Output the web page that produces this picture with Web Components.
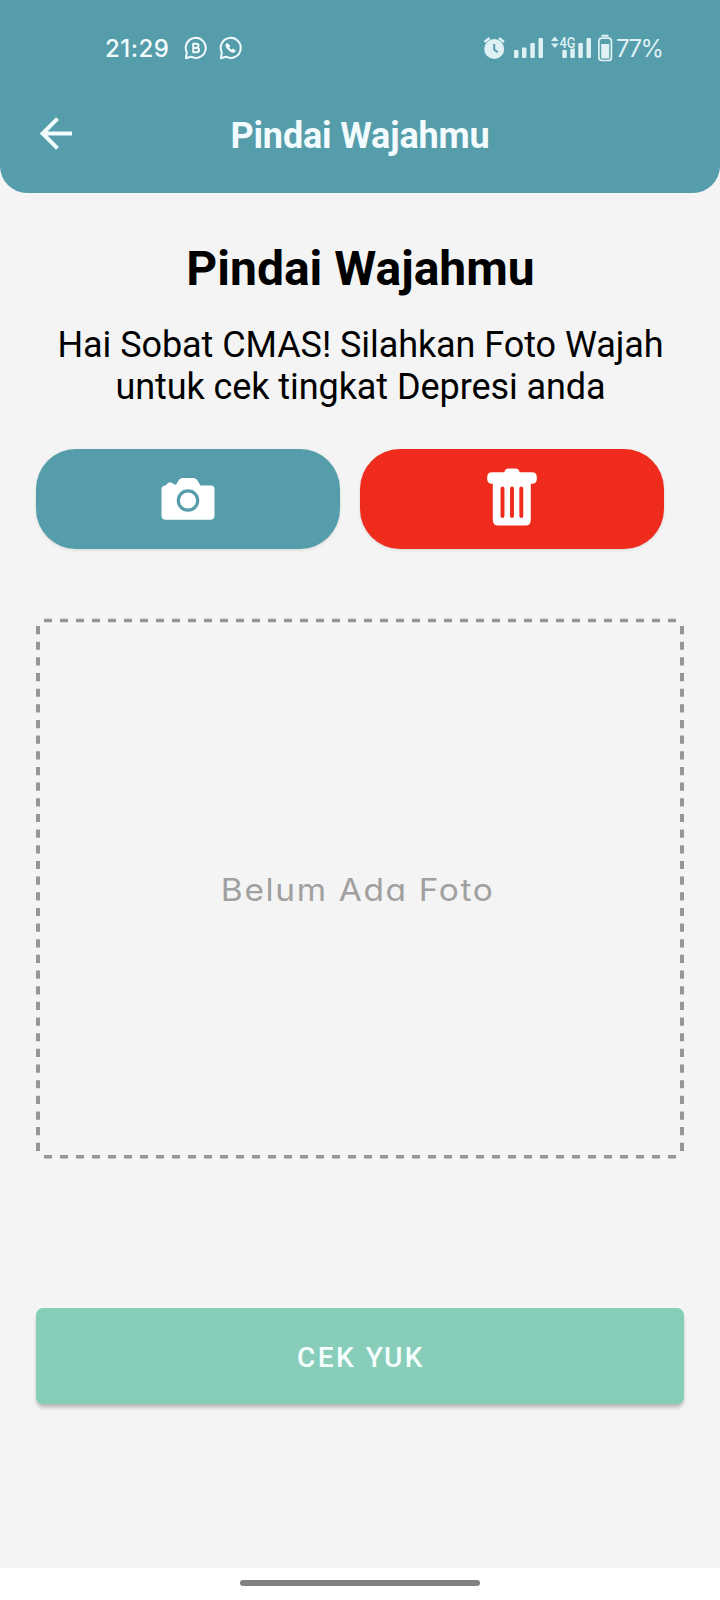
<!DOCTYPE html>
<html lang="id">
<head>
<meta charset="utf-8">
<title>Pindai Wajahmu</title>
<style>
html,body{margin:0;padding:0}
body{background:#f4f4f4;font-family:Roboto,"Liberation Sans",sans-serif;color:#000}
</style>
</head>
<body>
<scan-screen></scan-screen>
<script>
function define(name, html){
  const t=document.createElement('template');
  t.innerHTML=html;
  customElements.define(name,class extends HTMLElement{
    constructor(){super();this.attachShadow({mode:'open'}).appendChild(t.content.cloneNode(true));}
  });
}

define('status-bar',`
<style>
:host{display:flex;align-items:center;height:96px;box-sizing:border-box;padding:0 58px 0 105px;color:#f2fbfd;font:500 24px/28px Inter,Roboto,sans-serif}
svg{display:block;flex:none}
.time{width:79px;letter-spacing:.5px;white-space:nowrap;padding-top:2px}
.sys{margin-left:auto}
.pct{width:46px;margin-left:3px;font-weight:400;white-space:nowrap;letter-spacing:-1.6px;color:#dff1f5;padding-top:2px}
</style>
<span class="time">21:29</span>
<svg width="60" height="26" viewBox="184 35 60 26" fill="none" stroke="#f2fbfd" stroke-width="2" stroke-linejoin="round">
<path d="M186 58.200l.8-5.800A10 10 0 1 1 191 56.700Z"/>
<path d="M193.200 43.700h3.200a2 2 0 0 1 0 4.200h-3.200zM193.200 47.900h3.700a2.150 2.150 0 0 1 0 4.300h-3.700z"/>
<path d="M221 58.200l.8-5.800A10 10 0 1 1 226 56.700Z"/>
<path d="M227.200 43.200l-1.200 1.300c-.4 3.500 4.600 8.200 8 7.800l1.500-1.500-2.600-1.800-1.600 1c-1.100-.5-2-1.400-2.500-2.600l.9-1.500z" fill="#f2fbfd" stroke-width="1"/>
</svg>
<svg class="sys" width="130" height="28" viewBox="483 34 130 28" fill="#dff1f5">
<circle cx="494.200" cy="49" r="10"/><path d="M484.500 42l5-4M499 38l5 4" stroke="#dff1f5" stroke-width="2.300" fill="none"/><path d="M494.200 44v5.500l3.500 2.700" fill="none" stroke="#559daa" stroke-width="2"/>
<rect x="514" y="50" width="4.500" height="8" rx="1"/><rect x="522" y="47.500" width="4.500" height="10.500" rx="1"/><rect x="530.300" y="43" width="4.500" height="15" rx="1"/><rect x="538.500" y="38" width="4.500" height="20" rx="1"/>
<path d="M551 41l3.800-4.500L558.600 41zM551 43.500h7.600L554.800 48z"/>
<rect x="562.300" y="50" width="4.500" height="8" rx="1"/><rect x="570.300" y="47.500" width="4.500" height="10.500" rx="1"/><rect x="578.300" y="43" width="4.500" height="15" rx="1"/><rect x="586.500" y="38" width="4.500" height="20" rx="1"/>
<text x="559.500" y="47.500" font-family="Roboto" font-size="14" font-weight="500" textLength="16" lengthAdjust="spacingAndGlyphs" stroke="#559daa" stroke-width="1.500" paint-order="stroke">4G</text>
<path d="M601.500 34.800h7v2h-7zM601.200 44h8v14.500h-8z"/><rect x="598.900" y="38.200" width="12.500" height="22.300" rx="3" fill="none" stroke="#dff1f5" stroke-width="1.700"/>
</svg>
<span class="pct">77%</span>`);

define('app-header',`
<style>
:host{display:block;height:193px;background:#559daa;border-radius:0 0 27px 27px}
.bar{display:grid;grid-template-columns:80px 1fr 80px;align-items:center;height:77px;color:#f2fbfd}
svg{display:block;margin:0 0 2px 40px}
h2{margin:0;padding-top:2px;font-size:36px;line-height:42px;font-weight:700;letter-spacing:-.15px;text-align:center;white-space:nowrap}
</style>
<status-bar></status-bar>
<div class="bar"><svg width="33" height="34" viewBox="0 0 33 34" fill="none" stroke="#f2fbfd" stroke-width="4"><path d="M32 16.500H3M17.500 1.700L2.700 16.500l14.800 14.800"/></svg><h2><slot></slot></h2></div>`);

define('pill-button',`
<style>
:host{display:flex;align-items:center;justify-content:center;height:100px;border-radius:40px;background:var(--fill);box-shadow:0 1px 3px rgba(0,0,0,.12)}
</style><slot></slot>`);

define('camera-icon',`
<style>:host,svg{display:block}</style>
<svg width="54" height="44" viewBox="161 477 54 44"><path fill="#fff" d="M165.500 485.500l2.500-2.500q3-2 5.500 1l2.500.7 2.500-4.200q1.300-2.500 4-2.500h11q2.600 0 4 2.500l3 5h10.500q3.500 0 3.500 3.500v26.500q0 4.200-4.200 4.200h-44.600q-4.200 0-4.200-4.200v-25.800q0-4.200 4-4.200z"/><circle cx="188" cy="500.500" r="9.700" fill="#fff" stroke="#559daa" stroke-width="3.200"/></svg>`);

define('trash-icon',`
<style>:host,svg{display:block}svg{margin-bottom:5px}</style>
<svg width="50" height="58" viewBox="487 468 50 58"><path fill="#fff" d="M492 472.200h12.500q.5-3.700 4-3.700h7q3.500 0 4 3.700H532q4.800 0 4.800 4.800v2q0 4.800-4.800 4.800h-1.200V520q0 5.500-5.500 5.500h-27q-5.500 0-5.500-5.500v-36.200H492q-4.800 0-4.800-4.800v-2q0-4.800 4.800-4.800z"/><path d="M502.500 488.500v27.500M512 488.500v27.500M521.300 488.500v27.500" stroke="#ef2b1d" stroke-width="3.900" stroke-linecap="round"/></svg>`);

define('photo-frame',`
<style>
:host{display:grid;width:648px;height:541px}
svg,.label{grid-area:1/1}
.label{place-self:center;margin:2px 4px 0 0;font:400 31px/40px Inter,sans-serif;font-feature-settings:"cv11";color:#a0a0a0;letter-spacing:1.500px;white-space:nowrap;transform:scaleX(1.080)}
</style>
<svg width="648" height="541" fill="none" stroke="#969696"><path stroke-width="3.500" stroke-dasharray="8 8" d="M8 2.500H641M8 538.800H641"/><path stroke-width="4" stroke-dasharray="8.200 7.460" d="M2 8V534M646 8V534"/></svg>
<span class="label"><slot></slot></span>`);

define('action-button',`
<style>
:host{display:flex;align-items:center;justify-content:center;height:96px;border-radius:7px;background:#88cdba;color:#f5fffd;font-size:28px;font-weight:500;letter-spacing:2.500px;box-shadow:0 4px 4px -1px rgba(0,0,0,.28)}
span{padding:2px 0 0 2px}
</style><span><slot></slot></span>`);

define('gesture-bar',`
<style>:host{display:flex;justify-content:center;background:#fff;height:32px;box-sizing:border-box;padding-top:12px}i{width:240px;height:6px;border-radius:3px;background:#808080}</style><i></i>`);

define('scan-screen',`
<style>
:host{display:flex;flex-direction:column;width:720px;height:1600px;background:#f4f4f4;overflow:hidden}
main{display:flex;flex-direction:column;padding:48px 36px 0;flex:1}
h1{margin:0;padding-left:1px;font-size:48px;line-height:56px;text-align:center}
p{margin:27px 0 0;padding-left:1px;font-size:36px;line-height:42px;letter-spacing:-.07px;text-align:center;white-space:nowrap}
.row{display:grid;grid-template-columns:304px 304px;gap:20px;margin-top:41px}
photo-frame{margin-top:69px}
action-button{margin-top:149px}
</style>
<app-header>Pindai Wajahmu</app-header>
<main>
<h1>Pindai Wajahmu</h1>
<p>Hai Sobat CMAS! Silahkan Foto Wajah<br>untuk cek tingkat Depresi anda</p>
<div class="row"><pill-button style="--fill:#559daa"><camera-icon></camera-icon></pill-button><pill-button style="--fill:#ef2b1d"><trash-icon></trash-icon></pill-button></div>
<photo-frame>Belum Ada Foto</photo-frame>
<action-button>CEK YUK</action-button>
</main>
<gesture-bar></gesture-bar>`);
</script>
</body>
</html>
